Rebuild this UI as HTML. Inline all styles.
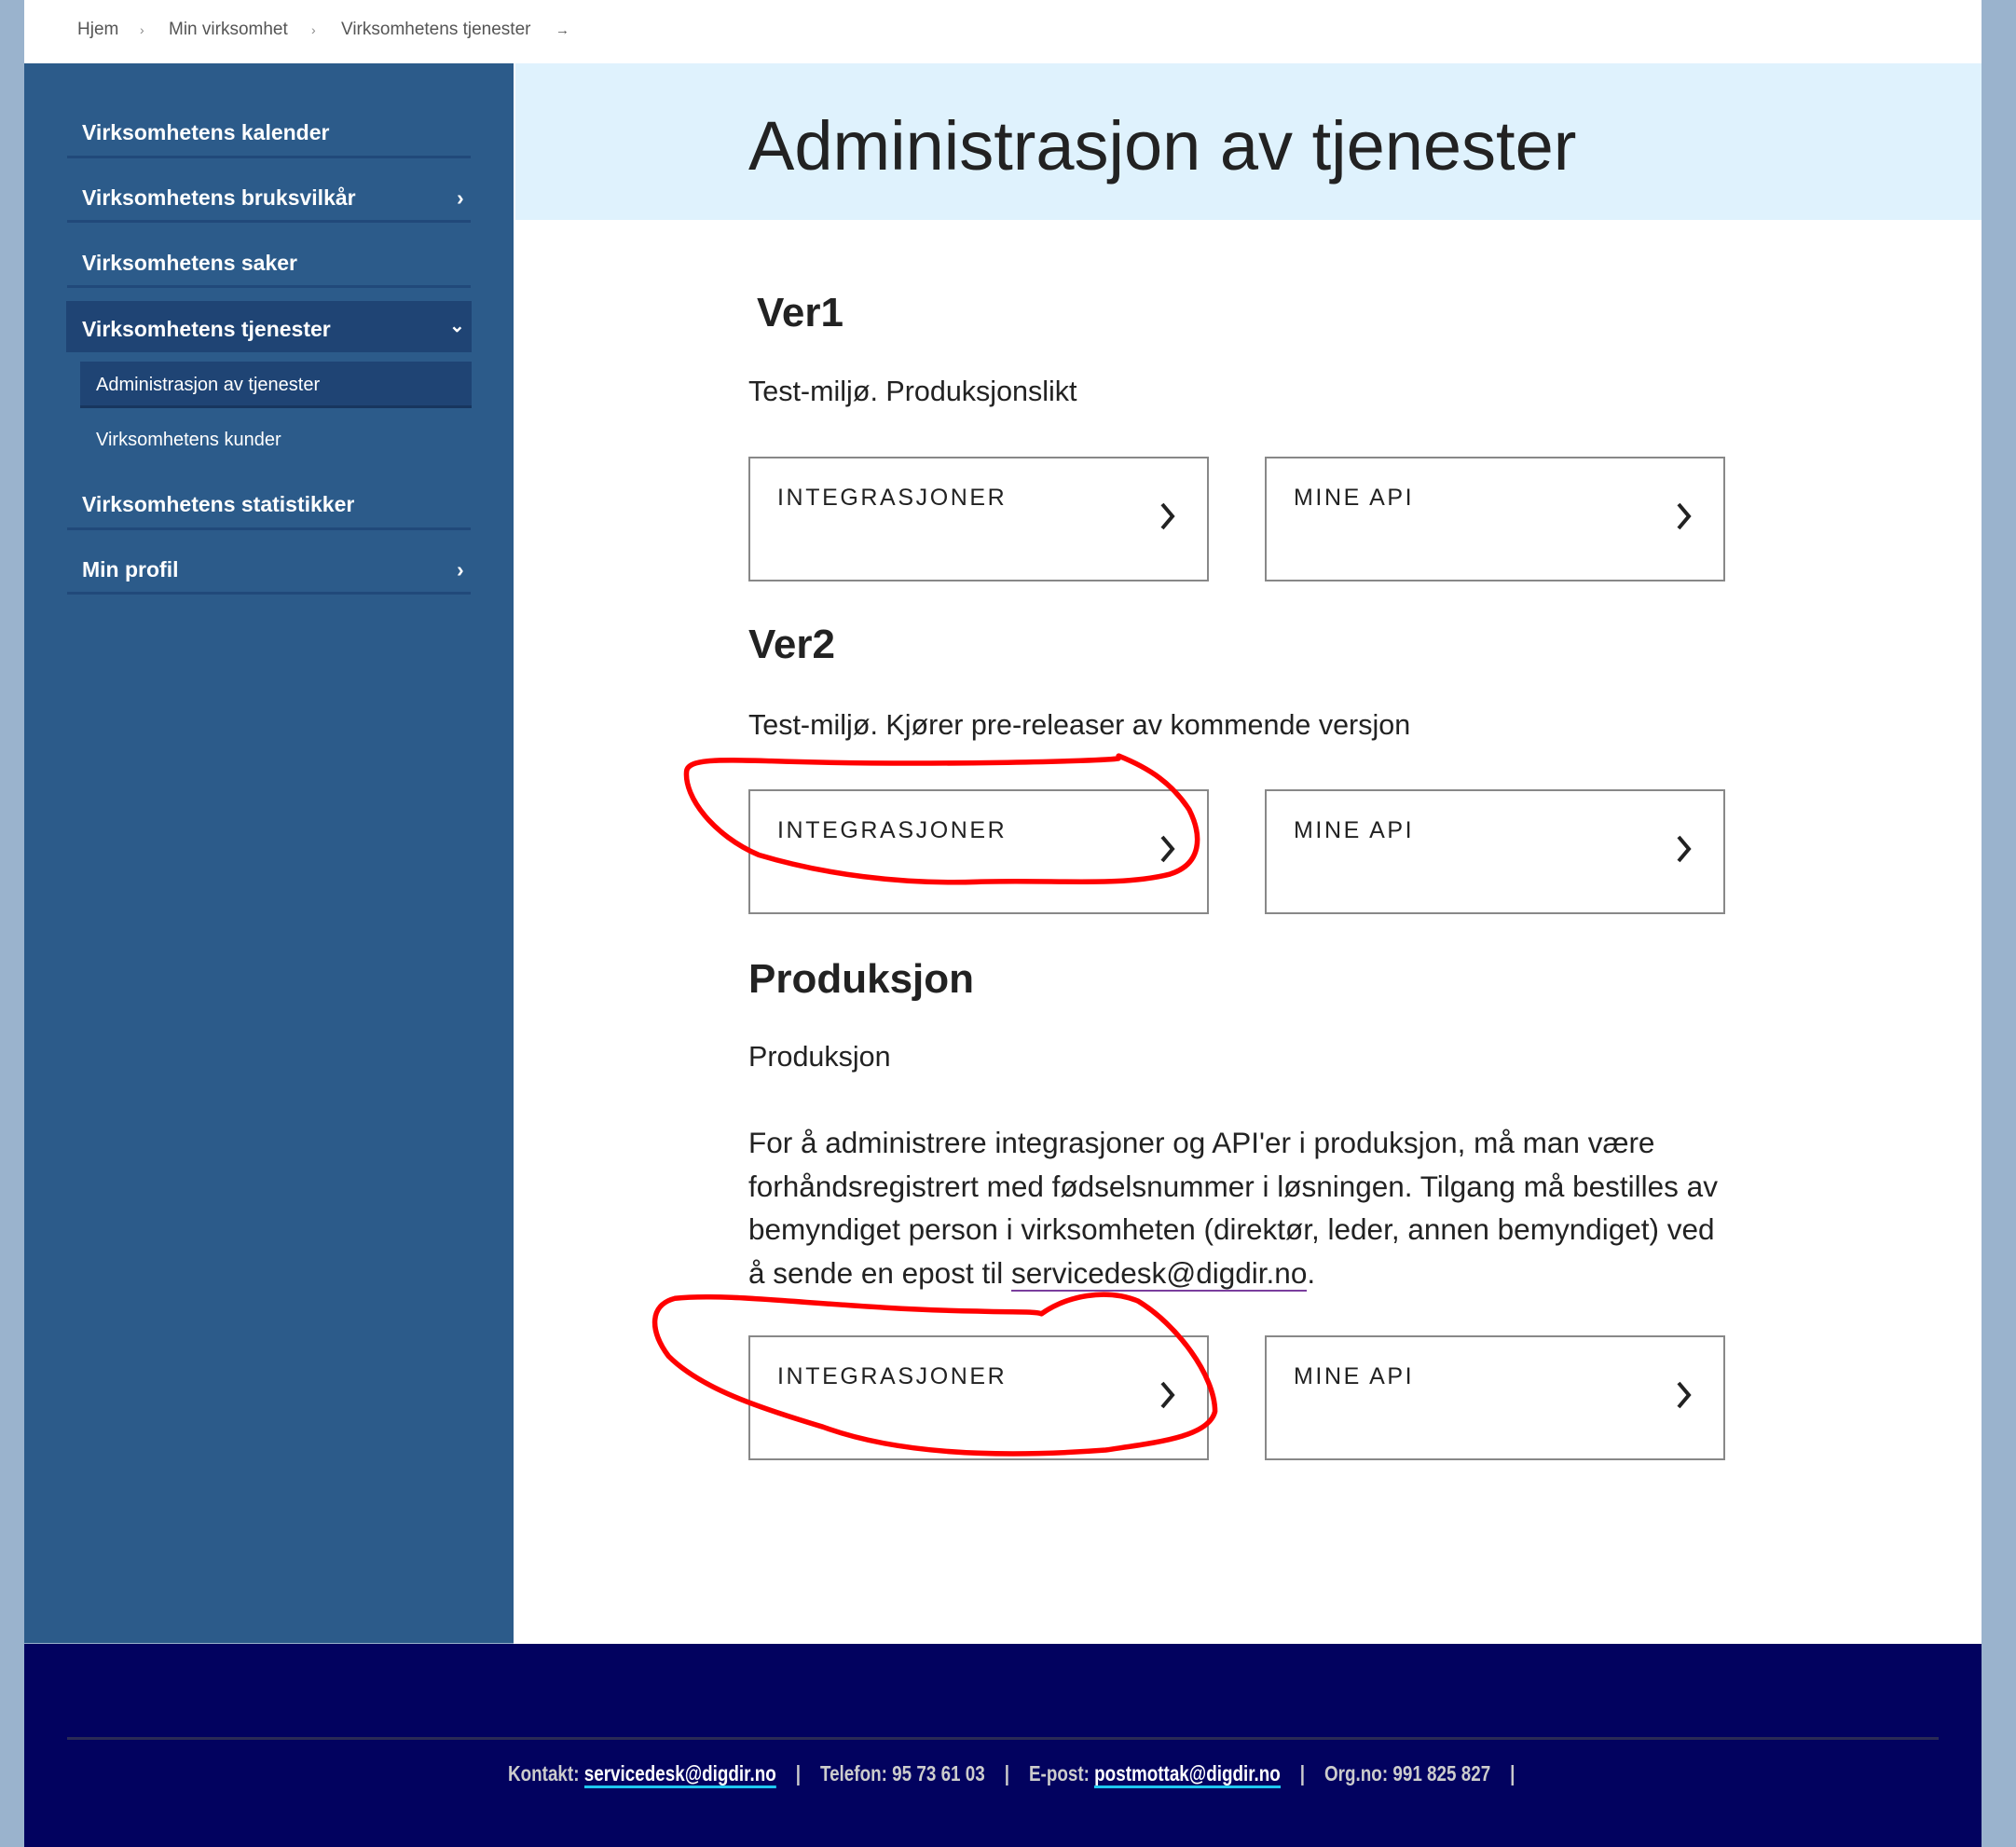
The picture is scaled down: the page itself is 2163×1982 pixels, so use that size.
<!DOCTYPE html>
<html><head><meta charset="utf-8"><style>
*{margin:0;padding:0;box-sizing:border-box}
body{width:2163px;height:1982px;position:relative;overflow:hidden;background:#9ab3cd;font-family:"Liberation Sans",sans-serif;color:#222}
.a{position:absolute;white-space:nowrap}
.bc{font-size:19px;color:#555;top:21px}
.side{left:26px;top:68px;width:525px;height:1695px;background:#2c5b8a}
.nav{left:88px;font-size:23px;font-weight:bold;color:#fff;line-height:28px}
.ln{left:72px;width:433px;height:3px;background:#21497a}
.box{position:absolute;width:494px;height:134px;border:2px solid #888;background:#fff}
.box span{position:absolute;left:29px;top:28px;font-size:25px;letter-spacing:2.6px;color:#222}
.box svg{position:absolute;left:438px;top:45px}
h2{position:absolute;font-size:44px;font-weight:bold;color:#222}
p{position:absolute;font-size:30.5px;color:#222}
</style></head><body>
<div class="a" style="left:26px;top:0;width:2100px;height:68px;background:#fff"></div>
<div class="a" style="left:551px;top:68px;width:1575px;height:1696px;background:#fff"></div>
<div class="a" style="left:553px;top:68px;width:1573px;height:168px;background:#dff2fd"></div>
<div class="a bc" style="left:83px">Hjem</div>
<div class="a bc" style="left:150px;font-size:14px;top:24px;color:#888">›</div>
<div class="a bc" style="left:181px">Min virksomhet</div>
<div class="a bc" style="left:334px;font-size:14px;top:24px;color:#888">›</div>
<div class="a bc" style="left:366px">Virksomhetens tjenester</div>
<div class="a bc" style="left:596px;font-size:15px;top:24px">→</div>

<div class="a side"></div>
<div class="a nav" style="top:128px">Virksomhetens kalender</div>
<div class="a ln" style="top:167px"></div>
<div class="a nav" style="top:198px">Virksomhetens bruksvilkår</div>
<div class="a nav" style="left:490px;top:198px">›</div>
<div class="a ln" style="top:236px"></div>
<div class="a nav" style="top:268px">Virksomhetens saker</div>
<div class="a ln" style="top:306px"></div>
<div class="a" style="left:71px;top:323px;width:435px;height:55px;background:#1f4474"></div>
<div class="a nav" style="top:339px">Virksomhetens tjenester</div>
<div class="a nav" style="left:482px;top:336px;font-size:20px">⌄</div>
<div class="a" style="left:86px;top:388px;width:420px;height:50px;background:#1f4474;border-bottom:3px solid #17365e"></div>
<div class="a" style="left:103px;top:402px;font-size:20px;color:#fff">Administrasjon av tjenester</div>
<div class="a" style="left:103px;top:461px;font-size:20px;color:#fff">Virksomhetens kunder</div>
<div class="a nav" style="top:527px">Virksomhetens statistikker</div>
<div class="a ln" style="top:566px"></div>
<div class="a nav" style="top:597px">Min profil</div>
<div class="a nav" style="left:490px;top:597px">›</div>
<div class="a ln" style="top:635px"></div>

<div class="a" style="left:803px;top:114px;font-size:74px;color:#222">Administrasjon av tjenester</div>

<h2 style="left:812px;top:311px">Ver1</h2>
<p style="left:803px;top:403px">Test-miljø. Produksjonslikt</p>
<div class="box" style="left:803px;top:490px"><span>INTEGRASJONER</span><svg width="20" height="34" viewBox="0 0 20 34"><path d="M4 4 L15 17 L4 30" fill="none" stroke="#222" stroke-width="4"/></svg></div>
<div class="box" style="left:1357px;top:490px"><span>MINE API</span><svg width="20" height="34" viewBox="0 0 20 34"><path d="M4 4 L15 17 L4 30" fill="none" stroke="#222" stroke-width="4"/></svg></div>

<h2 style="left:803px;top:667px">Ver2</h2>
<p style="left:803px;top:761px">Test-miljø. Kjører pre-releaser av kommende versjon</p>
<div class="box" style="left:803px;top:847px"><span>INTEGRASJONER</span><svg width="20" height="34" viewBox="0 0 20 34"><path d="M4 4 L15 17 L4 30" fill="none" stroke="#222" stroke-width="4"/></svg></div>
<div class="box" style="left:1357px;top:847px"><span>MINE API</span><svg width="20" height="34" viewBox="0 0 20 34"><path d="M4 4 L15 17 L4 30" fill="none" stroke="#222" stroke-width="4"/></svg></div>

<h2 style="left:803px;top:1026px">Produksjon</h2>
<p style="left:803px;top:1117px">Produksjon</p>
<p style="left:803px;top:1203px;line-height:46.5px;white-space:nowrap;font-size:31.5px">For å administrere integrasjoner og API'er i produksjon, må man være<br>forhåndsregistrert med fødselsnummer i løsningen. Tilgang må bestilles av<br>bemyndiget person i virksomheten (direktør, leder, annen bemyndiget) ved<br>å sende en epost til <span style="border-bottom:2px solid #7a3e9d">servicedesk@digdir.no</span>.</p>
<div class="box" style="left:803px;top:1433px"><span>INTEGRASJONER</span><svg width="20" height="34" viewBox="0 0 20 34"><path d="M4 4 L15 17 L4 30" fill="none" stroke="#222" stroke-width="4"/></svg></div>
<div class="box" style="left:1357px;top:1433px"><span>MINE API</span><svg width="20" height="34" viewBox="0 0 20 34"><path d="M4 4 L15 17 L4 30" fill="none" stroke="#222" stroke-width="4"/></svg></div>

<div class="a" style="left:26px;top:1764px;width:2100px;height:218px;background:#02025f"></div>
<div class="a" style="left:72px;top:1864px;width:2008px;height:3px;background:#2a2a55"></div>
<div class="a" style="left:545px;top:1890px;font-size:23px;font-weight:bold;color:#ccc;transform:scaleX(0.82);transform-origin:left">Kontakt: <span style="color:#fff;border-bottom:3px solid #1ec8f0">servicedesk@digdir.no</span> &nbsp;&nbsp; | &nbsp;&nbsp; Telefon: 95 73 61 03 &nbsp;&nbsp; | &nbsp;&nbsp; E-post: <span style="color:#fff;border-bottom:3px solid #1ec8f0">postmottak@digdir.no</span> &nbsp;&nbsp; | &nbsp;&nbsp; Org.no: 991 825 827 &nbsp;&nbsp; |</div>

<svg class="a" style="left:0;top:0" width="2163" height="1982" viewBox="0 0 1568 1436.8">
<path d="M870 590 C860 592 720 596 600 592 C560 591 535 590 534 600 C532 620 555 650 590 665 C640 680 700 688 760 686 C820 684 870 690 910 680 C935 672 935 650 925 630 C912 610 895 598 870 588" fill="none" stroke="#f00" stroke-width="4" stroke-linecap="round"/>
<path d="M810 1022 C830 1008 860 1002 885 1012 C915 1030 945 1070 945 1098 C940 1118 900 1122 860 1128 C780 1134 700 1132 640 1110 C590 1095 545 1080 520 1055 C505 1035 505 1015 525 1010 C570 1005 650 1018 760 1020 C790 1021 805 1020 810 1022" fill="none" stroke="#f00" stroke-width="4" stroke-linecap="round"/>
</svg>
</body></html>
